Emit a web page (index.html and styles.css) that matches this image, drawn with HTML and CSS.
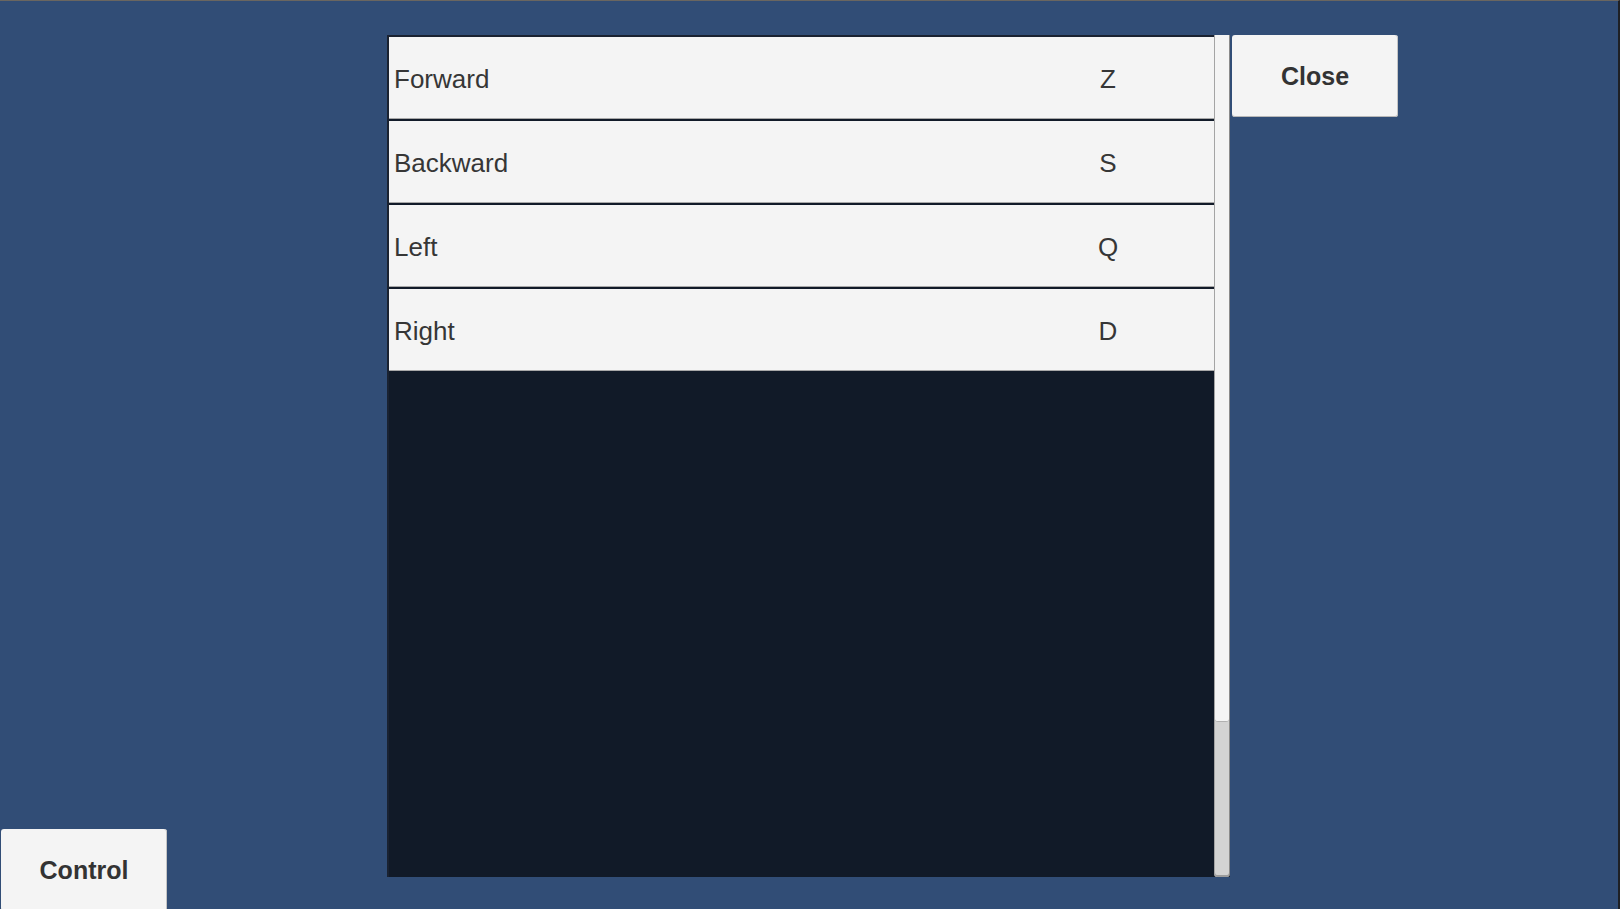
FILE: index.html
```html
<!DOCTYPE html>
<html lang="en">
<head>
<meta charset="utf-8">
<title>Controls</title>
<link rel="stylesheet" href="styles.css">
</head>
<body>
<div class="screen">
  <div class="left">
    <button class="btn control-btn">Control</button>
  </div>
  <div class="panel">
    <div class="list">
      <div class="row"><span class="label">Forward</span><span class="key">Z</span></div>
      <div class="row"><span class="label">Backward</span><span class="key">S</span></div>
      <div class="row"><span class="label">Left</span><span class="key">Q</span></div>
      <div class="row"><span class="label">Right</span><span class="key">D</span></div>
    </div>
    <div class="scrollbar"><div class="handle"></div></div>
  </div>
  <button class="btn close-btn">Close</button>
</div>
</body>
</html>
```
FILE: styles.css
```css
* { box-sizing: border-box; }
html, body { margin: 0; padding: 0; }
body {
  width: 1620px;
  height: 909px;
  overflow: hidden;
  background: #314d76;
  border-top: 1px solid #6a6660;
  border-right: 2px solid #1e2024;
  font-family: "Liberation Sans", Arial, sans-serif;
  color: #363636;
}
.screen {
  display: grid;
  grid-template-columns: 387px 843px 2px 166px 1fr;
  grid-template-rows: 34px 842px 1fr;
  height: 908px;
}
.left {
  grid-column: 1;
  grid-row: 1 / -1;
  display: flex;
  flex-direction: column;
  justify-content: flex-end;
  padding-left: 1px;
  margin-bottom: -2px;
}
.btn {
  font-family: "Liberation Sans", Arial, sans-serif;
  font-weight: bold;
  font-size: 25px;
  color: #333333;
  background: #f4f4f4;
  border: none;
  border-radius: 3px;
  width: 166px;
  height: 82px;
  padding: 0;
  box-shadow: inset 0 -1px 0 #b8b8b8, inset -1px 0 0 #c4c4c4;
}
.control-btn { display: block; }
.close-btn {
  grid-column: 4;
  grid-row: 2;
  align-self: start;
  padding-top: 1px;
}
.panel {
  grid-column: 2;
  grid-row: 2;
  display: flex;
  background: #111a28;
  border-top: 2px solid #1a2231;
  border-left: 2px solid #1a2231;
}
.list {
  flex: 1;
  display: flex;
  flex-direction: column;
  gap: 2px;
}
.row {
  height: 82px;
  background: #f4f4f4;
  display: grid;
  grid-template-columns: 1fr 212px;
  align-items: center;
  box-shadow: inset 0 -1px 0 #a8a8a8;
  font-size: 26px;
  padding-top: 2px;
}
.label { padding-left: 5px; }
.key { text-align: center; }
.scrollbar {
  width: 16px;
  margin-top: -2px;
  background: #d3d3d3;
  border-left: 1px solid #a4a4a4;
  border-right: 1px solid #8a8a8a;
  border-radius: 0 0 3px 3px;
  box-shadow: inset 0 -2px 0 #9c9c9c;
}
.handle {
  height: 687px;
  background: #f4f4f4;
  border-bottom: 1px solid #b0b0b0;
  border-radius: 0 0 3px 3px;
}
```
